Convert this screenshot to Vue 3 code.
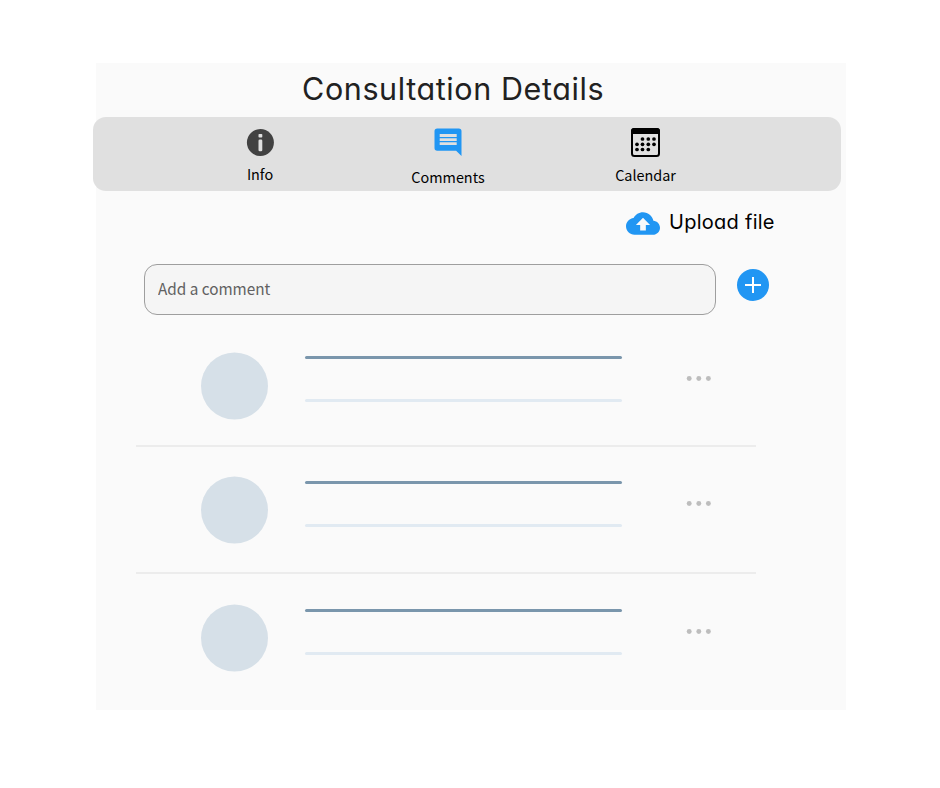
<script setup>
const dots = [
  [11.5, 11], [17.3, 11], [23, 11],
  [6, 16.3], [11.5, 16.3], [17.3, 16.3], [23, 16.3],
  [6, 21.5], [11.5, 21.5], [17.3, 21.5],
]
const comments = [1, 2, 3]
</script>

<template>
  <main class="card">
    <h1 class="title">Consultation Details</h1>

    <nav class="tabs">
      <a class="tab info">
        <svg width="28" height="29" viewBox="-0.4 -0.5 28 29">
          <circle cx="14" cy="14" r="13.5" fill="#424242" />
          <rect x="12.1" y="5.5" width="3.8" height="3.6" rx="0.8" fill="#e0e0e0" />
          <rect x="12.1" y="11" width="3.8" height="11.7" rx="1.3" fill="#e0e0e0" />
        </svg>
        <span>Info</span>
      </a>
      <a class="tab comments">
        <svg width="28" height="28" viewBox="0 0 28 28">
          <path d="M3.2 .5h21.6a2.7 2.7 0 0 1 2.7 2.7V28l-5.4-5.2H3.2a2.7 2.7 0 0 1-2.7-2.7V3.2A2.7 2.7 0 0 1 3.2 .5z" fill="#2196f3" />
          <path d="M5.7 6h17v2.9h-17zM5.7 10.2h17v2.7h-17zM5.7 14.3h17v2.8h-17z" fill="#e0e0e0" />
        </svg>
        <span>Comments</span>
      </a>
      <a class="tab calendar">
        <svg width="29" height="29" viewBox="0 0 29 29">
          <rect x="1" y="1" width="27" height="27" rx="2.5" fill="none" stroke="#000" stroke-width="2" />
          <path d="M0 6V3a3 3 0 0 1 3-3h23a3 3 0 0 1 3 3v3z" />
          <circle v-for="([x, y], i) in dots" :key="i" :cx="x" :cy="y" r="1.85" />
        </svg>
        <span>Calendar</span>
      </a>
    </nav>

    <button class="upload">
      <svg width="34" height="23" viewBox="0 4 24 16">
        <path fill="#2196f3" d="M19.35 10.04C18.67 6.59 15.64 4 12 4 9.11 4 6.6 5.64 5.35 8.04 2.34 8.36 0 10.91 0 14c0 3.31 2.69 6 6 6h13c2.76 0 5-2.24 5-5 0-2.64-2.05-4.78-4.65-4.96zM14 13v4h-4v-4H7l5-5 5 5h-3z" />
      </svg>
      <span>Upload file</span>
    </button>

    <div class="composer">
      <input class="field" placeholder="Add a comment" />
      <button class="add">
        <svg width="32" height="32" viewBox="0 0 32 32">
          <circle cx="16" cy="16" r="16" fill="#2196f3" />
          <path d="M16 8v16M8 16h16" stroke="#fff" stroke-width="2" />
        </svg>
      </button>
    </div>

    <ul class="list">
      <li v-for="n in comments" :key="n" class="row">
        <svg class="avatar" width="67" height="68" viewBox="0 0 67 68">
          <circle cx="33.5" cy="34" r="33.5" />
        </svg>
        <div class="lines">
          <div class="line strong"></div>
          <div class="line"></div>
        </div>
        <svg class="more" width="26" height="7" viewBox="0 0 26 7">
          <circle cx="3.2" cy="3.5" r="2.45" />
          <circle cx="12.8" cy="3.5" r="2.45" />
          <circle cx="22.4" cy="3.5" r="2.45" />
        </svg>
      </li>
    </ul>
  </main>
</template>

<style>
body {
  background: #fff;
}
</style>

<style scoped>
.card {
  display: flow-root;
  box-sizing: border-box;
  width: 750px;
  height: 647px;
  margin: 63px 0 0 96px;
  background: #fafafa;
}
.title {
  height: 54px;
  margin: 0 0 0 206px;
  font: 400 30.5px/51px Inter, sans-serif;
  font-feature-settings: "cv11";
  letter-spacing: 0.6px;
  color: #212121;
  white-space: nowrap;
}
.tabs {
  display: grid;
  grid-template-columns: 334px 42px 353px;
  box-sizing: border-box;
  width: 748px;
  height: 74px;
  margin-left: -3px;
  border-radius: 13px;
  background: #e0e0e0;
}
.tab {
  display: flex;
  flex-direction: column;
  align-items: center;
  font: 400 14.4px/20px "Noto Sans CJK SC", sans-serif;
  color: #000;
  white-space: nowrap;
}
.tab svg {
  flex: none;
}
.info {
  padding-top: 11px;
  gap: 7px;
}
.comments {
  padding-top: 11px;
  gap: 11px;
}
.calendar {
  padding-top: 11px;
  gap: 8px;
}
button {
  padding: 0;
  border: 0;
  background: none;
}
.upload {
  display: flex;
  align-items: center;
  gap: 9px;
  height: 23px;
  margin: 21px 0 0 530px;
  font: 400 20px/23px Inter, sans-serif;
  font-feature-settings: "cv11";
  letter-spacing: 0.27px;
  color: #000;
  white-space: nowrap;
}
.upload span {
  margin-top: -3px;
}
.composer {
  display: flex;
  gap: 21px;
  margin: 29px 0 0 48px;
}
.field {
  box-sizing: border-box;
  width: 572px;
  height: 51px;
  padding: 0 13px 3px;
  border: 1px solid #9e9e9e;
  border-radius: 13px;
  background: #f5f5f5;
  font: 400 15.3px/24px "Noto Sans CJK SC", sans-serif;
}
.field::placeholder {
  color: #616161;
  opacity: 1;
}
.add {
  width: 32px;
  height: 32px;
  margin-top: 5px;
}
.add svg {
  display: block;
}
.list {
  width: 620px;
  margin: 37px 0 0 40px;
  padding: 0;
  list-style: none;
}
.row {
  display: flex;
  box-sizing: border-box;
  height: 95px;
  padding-left: 65px;
  border-bottom: 2px solid #ececec;
}
.row + .row {
  height: 127px;
  padding-top: 29px;
}
.row:last-child {
  height: 128px;
  padding-top: 30px;
  border-bottom: 0;
}
.avatar {
  flex: none;
  fill: #d6e0e8;
}
.lines {
  display: flex;
  flex-direction: column;
  gap: 40px;
  width: 317px;
  margin: 4px 0 0 37px;
}
.row + .row .lines {
  margin-top: 5px;
}
.line {
  height: 3px;
  border-radius: 1.5px;
  background: #e1eaf2;
}
.strong {
  background: #7a96ac;
}
.more {
  margin: 23px 0 0 64px;
  fill: #bdbdbd;
}
.row + .row .more {
  margin-top: 24px;
}
</style>
